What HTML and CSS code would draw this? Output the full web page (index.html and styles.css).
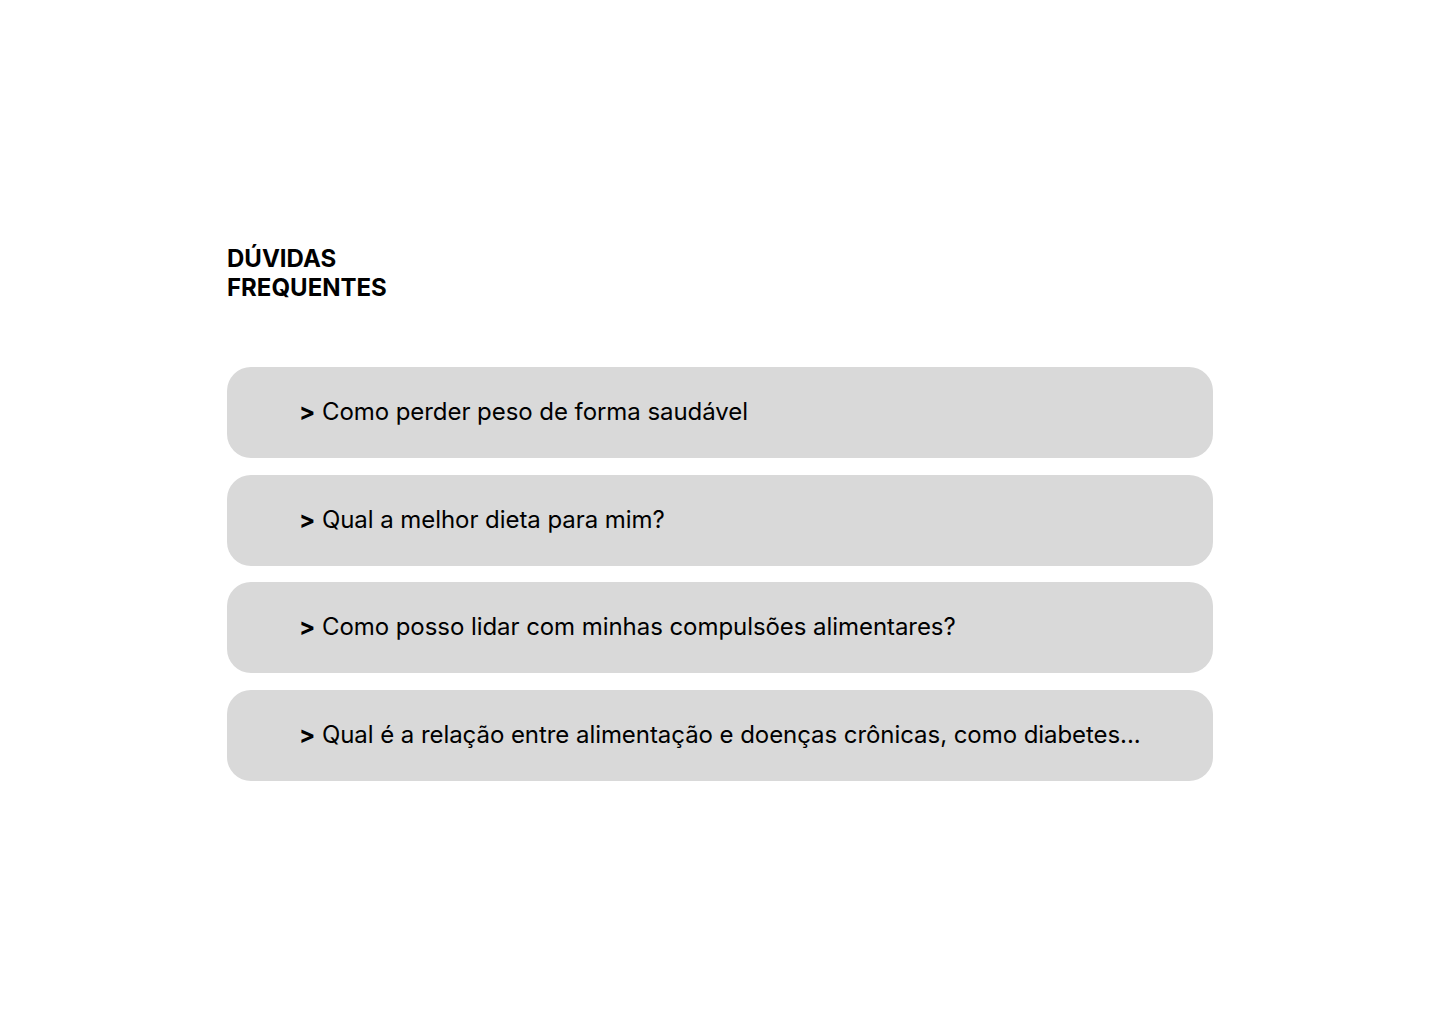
FILE: index.html
```html
<!DOCTYPE html>
<html lang="pt">
<head>
<meta charset="utf-8">
<link rel="stylesheet" href="styles.css">
</head>
<body>
<main class="faq">
  <h1 class="faq-title">DÚVIDAS<br>FREQUENTES</h1>
  <ul class="faq-list">
    <li class="faq-item"><span class="arrow">&gt;</span> Como perder peso de forma saudável</li>
    <li class="faq-item"><span class="arrow">&gt;</span> Qual a melhor dieta para mim?</li>
    <li class="faq-item"><span class="arrow">&gt;</span> Como posso lidar com minhas compulsões alimentares?</li>
    <li class="faq-item"><span class="arrow">&gt;</span> Qual é a relação entre alimentação e doenças crônicas, como diabetes...</li>
  </ul>
</main>
</body>
</html>
```

FILE: styles.css
```css
html, body {
  margin: 0;
  padding: 0;
  background: #ffffff;
}
body {
  font-family: Inter, "Noto Sans", sans-serif;
  color: #000;
}
.faq {
  width: 986px;
  margin: 0 auto;
  padding-top: 244px;
  box-sizing: border-box;
}
.faq-title {
  margin: 0;
  font-size: 24px;
  line-height: 29px;
  font-weight: 700;
}
.faq-list {
  list-style: none;
  margin: 65px 0 0 0;
  padding: 0;
  display: flex;
  flex-direction: column;
  gap: 16.67px;
}
.faq-item {
  height: 91px;
  box-sizing: border-box;
  background: #d9d9d9;
  border-radius: 24px;
  display: flex;
  align-items: center;
  padding-left: 72px;
  padding-bottom: 2px;
  font-size: 24px;
  letter-spacing: -0.06px;
  white-space: pre;
}
.arrow {
  font-weight: 700;
}
```
